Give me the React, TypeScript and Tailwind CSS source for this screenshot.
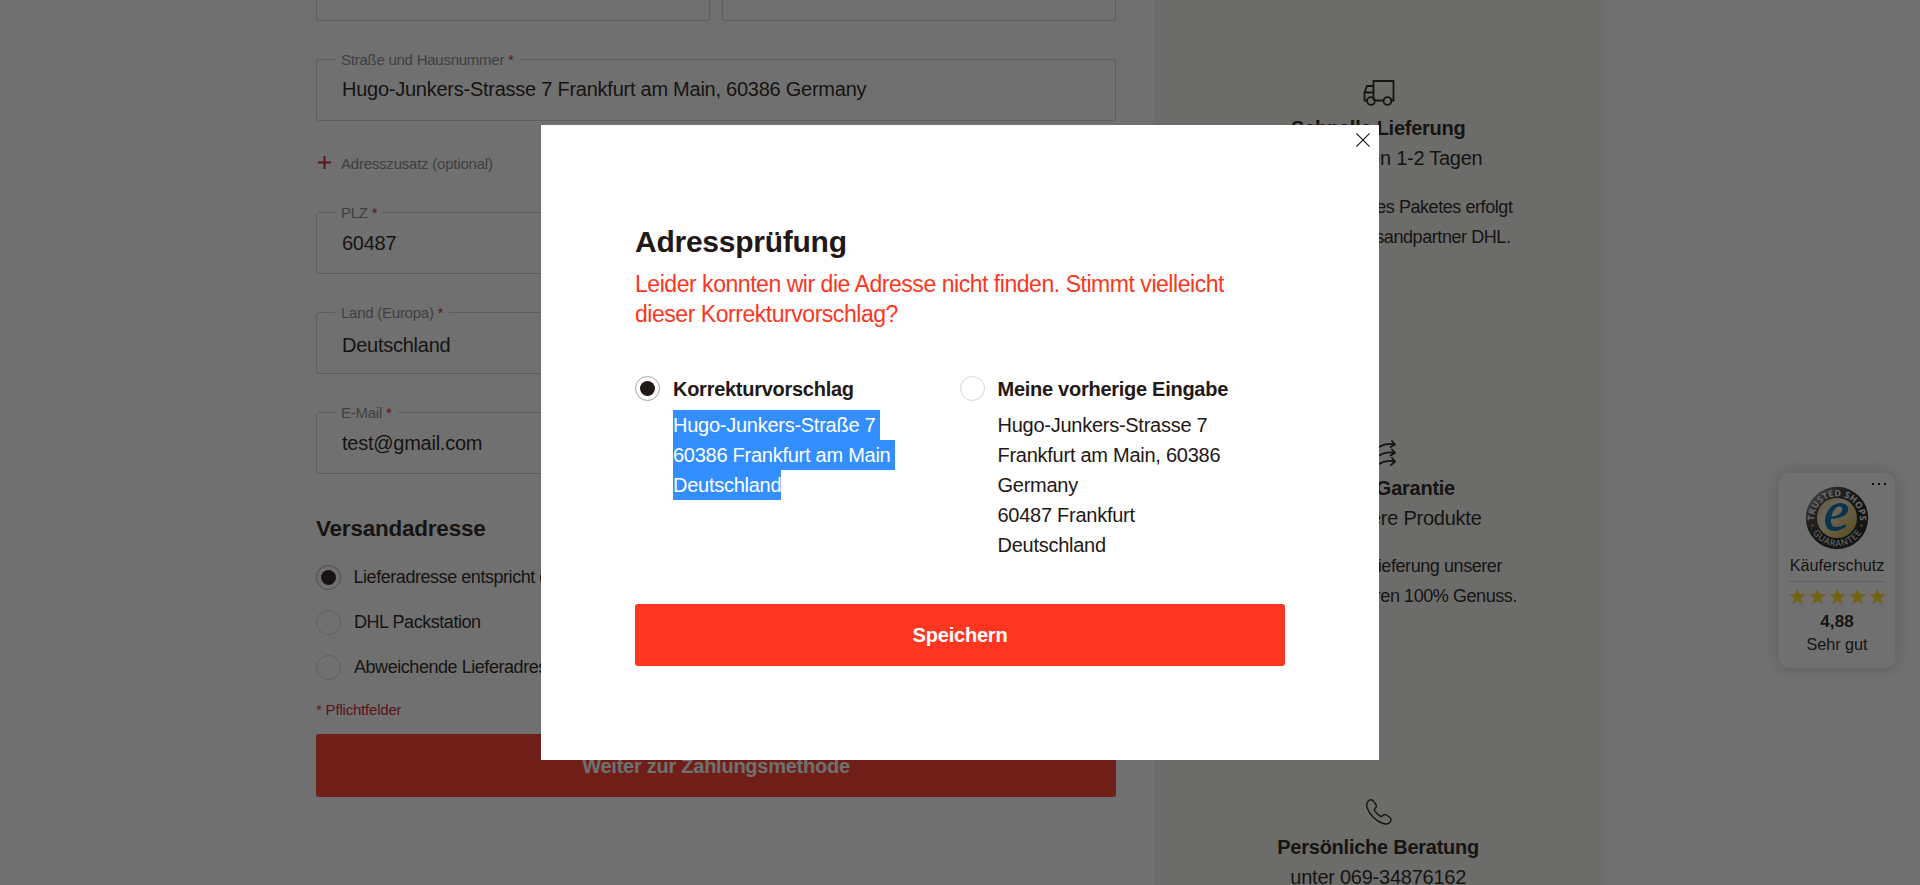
import React from "react";

type FieldProps = { label: string; value: string; shift: string };

function Field({ label, value, shift }: FieldProps) {
  return (
    <div className="relative flex h-[62px] items-center rounded-[3px] border border-[#cfd1d4] pl-[25px]">
      <span className="absolute -top-[9px] left-[18px] bg-white px-[6px] text-[15px] leading-[17px] tracking-[-0.25px] text-[#86888c]">
        {label} <span className="text-[#c8202f]">*</span>
      </span>
      <span className={`text-[20px] leading-[30px] tracking-[-0.25px] ${shift}`}>{value}</span>
    </div>
  );
}

function Radio({ checked = false }: { checked?: boolean }) {
  return (
    <span
      className={`flex size-[25px] shrink-0 items-center justify-center rounded-full border bg-white ${
        checked ? "border-[#a5a5a8]" : "border-[#d3d6da]"
      }`}
    >
      {checked && <span className="size-[15.500px] rounded-full bg-[#221815]" />}
    </span>
  );
}

function Line({ width, className, children }: { width: string; className: string; children: React.ReactNode }) {
  return (
    <div className={`mx-auto flex h-[30px] justify-end whitespace-nowrap leading-[30px] ${width} ${className}`}>
      {children}
    </div>
  );
}

const title = "text-[20px] font-bold tracking-[-0.25px]";
const sub = "text-[20px] tracking-[-0.25px]";
const para = "text-[18px] tracking-[-0.43px]";

function TruckIcon() {
  return (
    <svg width="32" height="26" viewBox="0 0 32 26" fill="none" stroke="#221815" strokeWidth="1.8">
      <path d="M4.500 20.500H1.500V12.500L4 6h6.500M1.500 12.500h9M10.500 20.500V1h20v19.500h-3.500M12 20.500h8.500" />
      <circle cx="8" cy="21" r="3.900" />
      <circle cx="24.500" cy="21" r="3.900" />
    </svg>
  );
}

function ArrowsIcon() {
  return (
    <svg width="34" height="26" viewBox="0 0 34 26" fill="none" stroke="#221815" strokeWidth="1.8" strokeLinecap="round" strokeLinejoin="round">
      <path d="M2 7c5-5 9 3 15 0 5-3 9-4 16-2.500M30 1l3 3.500-4.500 2.500" />
      <path d="M2 15.500c5-5 9 3 15 0 5-3 9-4 16-2.500M30 9.500l3 3.500-4.500 2.500" />
      <path d="M2 24c5-5 9 3 15 0 5-3 9-4 16-2.500M30 18l3 3.500-4 3.500" />
    </svg>
  );
}

function PhoneIcon() {
  return (
    <svg width="26" height="26" viewBox="0 0 26 26" fill="none" stroke="#221815" strokeWidth="1.400" strokeLinejoin="round">
      <path d="M2.600 1.700C4.300.4 6.200.5 7.500 2.200l2.300 3.200c1 1.500.7 2.800-.8 4.100-.9.800-.8 1.700-.1 2.700 1.400 1.900 2.900 3.400 4.800 4.700 1 .7 1.900.8 2.700-.1 1.300-1.500 2.600-1.800 4.100-.8l3.100 2.200c1.800 1.300 1.800 3.300.4 5-1.500 1.700-4.100 2.100-6.900 1.300C9.900 22.300 3.200 15.400 1.100 8.600.3 5.800.8 3.200 2.600 1.700Z" />
    </svg>
  );
}

function Seal() {
  return (
    <svg width="64" height="64" viewBox="0 0 64 64">
      <defs>
        <linearGradient id="ring" x1="0" y1="0" x2="0.6" y2="0.6">
          <stop offset="0.1" stopColor="#a8a8a8" />
          <stop offset="0.5" stopColor="#3a3a3a" />
          <stop offset="1" stopColor="#1c1c1c" />
        </linearGradient>
        <linearGradient id="gold" x1="0" y1="0" x2="1" y2="1">
          <stop offset="0" stopColor="#d8c98c" />
          <stop offset="0.4" stopColor="#efe6c0" />
          <stop offset="1" stopColor="#c99a1c" />
        </linearGradient>
        <path id="upper" d="M9.500 38A23 23 0 1 1 54.500 38" />
        <path id="lower" d="M3.500 35A28.700 28.700 0 0 0 60.500 35" />
      </defs>
      <circle cx="32" cy="32" r="31.200" fill="url(#ring)" />
      <circle cx="32" cy="32" r="20" fill="url(#gold)" />
      <text fontFamily="Open Sans, sans-serif" fontWeight="700" fontSize="9" fill="#f0f0f0">
        <textPath href="#upper" startOffset="50%" textAnchor="middle" textLength="75">TRUSTED SHOPS</textPath>
      </text>
      <text fontFamily="Open Sans, sans-serif" fontWeight="500" fontSize="9" fill="#f0f0f0">
        <textPath href="#lower" startOffset="50%" textAnchor="middle" textLength="58">GUARANTEE</textPath>
      </text>
      <circle cx="7.500" cy="39.500" r="1" fill="#e3c24a" />
      <circle cx="56.500" cy="39.500" r="1" fill="#e3c24a" />
      <text x="31.500" y="44" textAnchor="middle" fontFamily="Liberation Serif, serif" fontStyle="italic" fontSize="57" fill="#0068a8" stroke="#0068a8" strokeWidth="1">e</text>
    </svg>
  );
}

function Star() {
  return (
    <svg width="17" height="17" viewBox="0 0 17 17" fill="#ffdc0f">
      <path d="M8.500 0l2 6.200H17l-5.300 3.900 2 6.400-5.200-3.900-5.200 3.900 2-6.400L0 6.200h6.500z" />
    </svg>
  );
}

export default function App() {
  return (
    <div className="relative h-[885px] w-[1920px] overflow-hidden bg-white font-['Liberation_Sans',Arial,sans-serif] text-[#221815]">
      <div className="flex h-full pl-[316px]">
        <main className="flex w-[800px] flex-col">
          <div className="flex gap-[12px]">
            <div className="h-[21px] flex-1 rounded-b-[3px] border border-t-0 border-[#cfd1d4]" />
            <div className="h-[21px] flex-1 rounded-b-[3px] border border-t-0 border-[#cfd1d4]" />
          </div>
          <div className="mt-[38px]">
            <Field label="Straße und Hausnummer" value="Hugo-Junkers-Strasse 7 Frankfurt am Main, 60386 Germany" shift="-mt-[2px]" />
          </div>
          <div className="mt-[33px] flex h-[20px] items-center pl-[1.500px] text-[15px] leading-[20px] tracking-[-0.22px] text-[#86888c]">
            <svg className="-mt-[4px] mr-[10.500px]" width="13" height="13" viewBox="0 0 13 13" stroke="#c8202f" strokeWidth="2">
              <path d="M6.500 0v13M0 6.500h13" />
            </svg>
            Adresszusatz (optional)
          </div>
          <div className="mt-[38px] flex flex-col gap-[38px]">
            <Field label="PLZ" value="60487" shift="-mt-px" />
            <Field label="Land (Europa)" value="Deutschland" shift="mt-[4px]" />
            <Field label="E-Mail" value="test@gmail.com" shift="mt-0" />
          </div>
          <h2 className="mt-[40px] text-[22.500px] font-bold leading-[30px] tracking-[-0.22px]">Versandadresse</h2>
          <div className="mt-[21px] flex flex-col gap-[20px] text-[18px] leading-[25px] tracking-[-0.45px]">
            <div className="flex gap-[12.500px] whitespace-nowrap"><Radio checked />Lieferadresse entspricht der Rechnungsadresse</div>
            <div className="flex gap-[13px]"><Radio />DHL Packstation</div>
            <div className="flex gap-[13px]"><Radio />Abweichende Lieferadresse</div>
          </div>
          <p className="mt-[20px] text-[15px] leading-[20px] tracking-[-0.2px] text-[#c8202f]">* Pflichtfelder</p>
          <button className="mt-[14px] h-[63px] rounded-[3px] bg-[#fc3621] text-[20px] font-bold tracking-[-0.25px] text-white">
            Weiter zur Zahlungsmethode
          </button>
        </main>
        <aside className="ml-[38px] flex w-[450px] flex-col bg-[#f5f4f0] pt-[80px]">
          <section className="h-[360px] shrink-0">
            <div className="flex h-[33px] justify-center"><TruckIcon /></div>
            <Line width="w-[173px]" className={title}>Schnelle Lieferung</Line>
            <Line width="w-[207px]" className={sub}>innerhalb von 1-2 Tagen</Line>
            <div className="h-[19px]" />
            <Line width="w-[267px]" className={para}>Die Zustellung des Paketes erfolgt</Line>
            <Line width="w-[263px]" className={para}>durch den Versandpartner DHL.</Line>
          </section>
          <section className="h-[359px] shrink-0">
            <div className="flex h-[33px] justify-center"><ArrowsIcon /></div>
            <Line width="w-[152px]" className={title}>Genuss-Garantie</Line>
            <Line width="w-[205px]" className={sub}>für unsere Produkte</Line>
            <div className="h-[18px]" />
            <Line width="w-[246px]" className={para}>Mit der Lieferung unserer</Line>
            <Line width="w-[276px]" className={para}>Produkte garantieren 100% Genuss.</Line>
          </section>
          <section className="shrink-0">
            <div className="flex h-[33px] justify-center"><PhoneIcon /></div>
            <Line width="w-[200px]" className={title}>Persönliche Beratung</Line>
            <Line width="w-[174px]" className={sub}>unter 069-34876162</Line>
          </section>
        </aside>
      </div>

      <div className="absolute left-[1779px] top-[473px] flex h-[195px] w-[116px] flex-col items-center rounded-[10px] bg-white pt-[13px] shadow-[0_0_16px_rgba(0,0,0,0.22)]">
        <div className="absolute right-[9px] top-[10px] flex gap-[4px]">
          <span className="size-[2px] bg-black" />
          <span className="size-[2px] bg-black" />
          <span className="size-[2px] bg-black" />
        </div>
        <Seal />
        <div className="mt-[3px] text-[16.200px] leading-[24px]">Käuferschutz</div>
        <div className="mt-[4px] h-px w-[96px] bg-[#d8d8d8]" />
        <div className="mt-[6px] flex gap-[3px]"><Star /><Star /><Star /><Star /><Star /></div>
        <div className="mt-[6px] text-[17px] font-bold leading-[22px] tracking-[0.1px]">4,88</div>
        <div className="-mt-px text-[16.200px] leading-[24px]">Sehr gut</div>
      </div>

      <div className="absolute inset-0 flex items-center justify-center bg-[#111111]/60">
        <div className="relative flex h-[635px] w-[838px] flex-col bg-white px-[94px] pt-[99px]">
          <svg className="absolute right-[9px] top-[8px]" width="14" height="14" viewBox="0 0 14 14" stroke="#111" strokeWidth="1.100">
            <path d="M.4.4l13.200 13.200M13.600.4L.4 13.600" />
          </svg>
          <h1 className="text-[30px] font-bold leading-[36px] tracking-[-0.25px]">Adressprüfung</h1>
          <p className="mt-[9px] whitespace-nowrap text-[23px] leading-[30px] tracking-[-0.46px] text-[#fc3621]">
            Leider konnten wir die Adresse nicht finden. Stimmt vielleicht
            <br />
            dieser Korrekturvorschlag?
          </p>
          <div className="mt-[47px] grid h-[228px] shrink-0 grid-cols-2 text-[20px] tracking-[-0.26px]">
            <div className="flex gap-[13px]">
              <Radio checked />
              <div>
                <div className="pt-px font-bold leading-[25px] tracking-[-0.27px]">Korrekturvorschlag</div>
                <div className="mt-[8px] flex flex-col items-start whitespace-pre leading-[30px] text-white">
                  <span className="w-[207px] bg-[#338fff]">Hugo-Junkers-Straße 7</span>
                  <span className="w-[222px] bg-[#338fff]">60386 Frankfurt am Main</span>
                  <span className="w-[108px] bg-[#338fff]">Deutschland</span>
                </div>
              </div>
            </div>
            <div className="flex gap-[12.500px]">
              <Radio />
              <div>
                <div className="pt-px font-bold leading-[25px] tracking-[-0.27px]">Meine vorherige Eingabe</div>
                <div className="mt-[8px] leading-[30px]">
                  Hugo-Junkers-Strasse 7<br />Frankfurt am Main, 60386<br />Germany<br />60487 Frankfurt<br />Deutschland
                </div>
              </div>
            </div>
          </div>
          <button className="h-[62px] rounded-[3px] bg-[#fc3621] text-[20px] font-bold tracking-[-0.2px] text-white">Speichern</button>
        </div>
      </div>
    </div>
  );
}
